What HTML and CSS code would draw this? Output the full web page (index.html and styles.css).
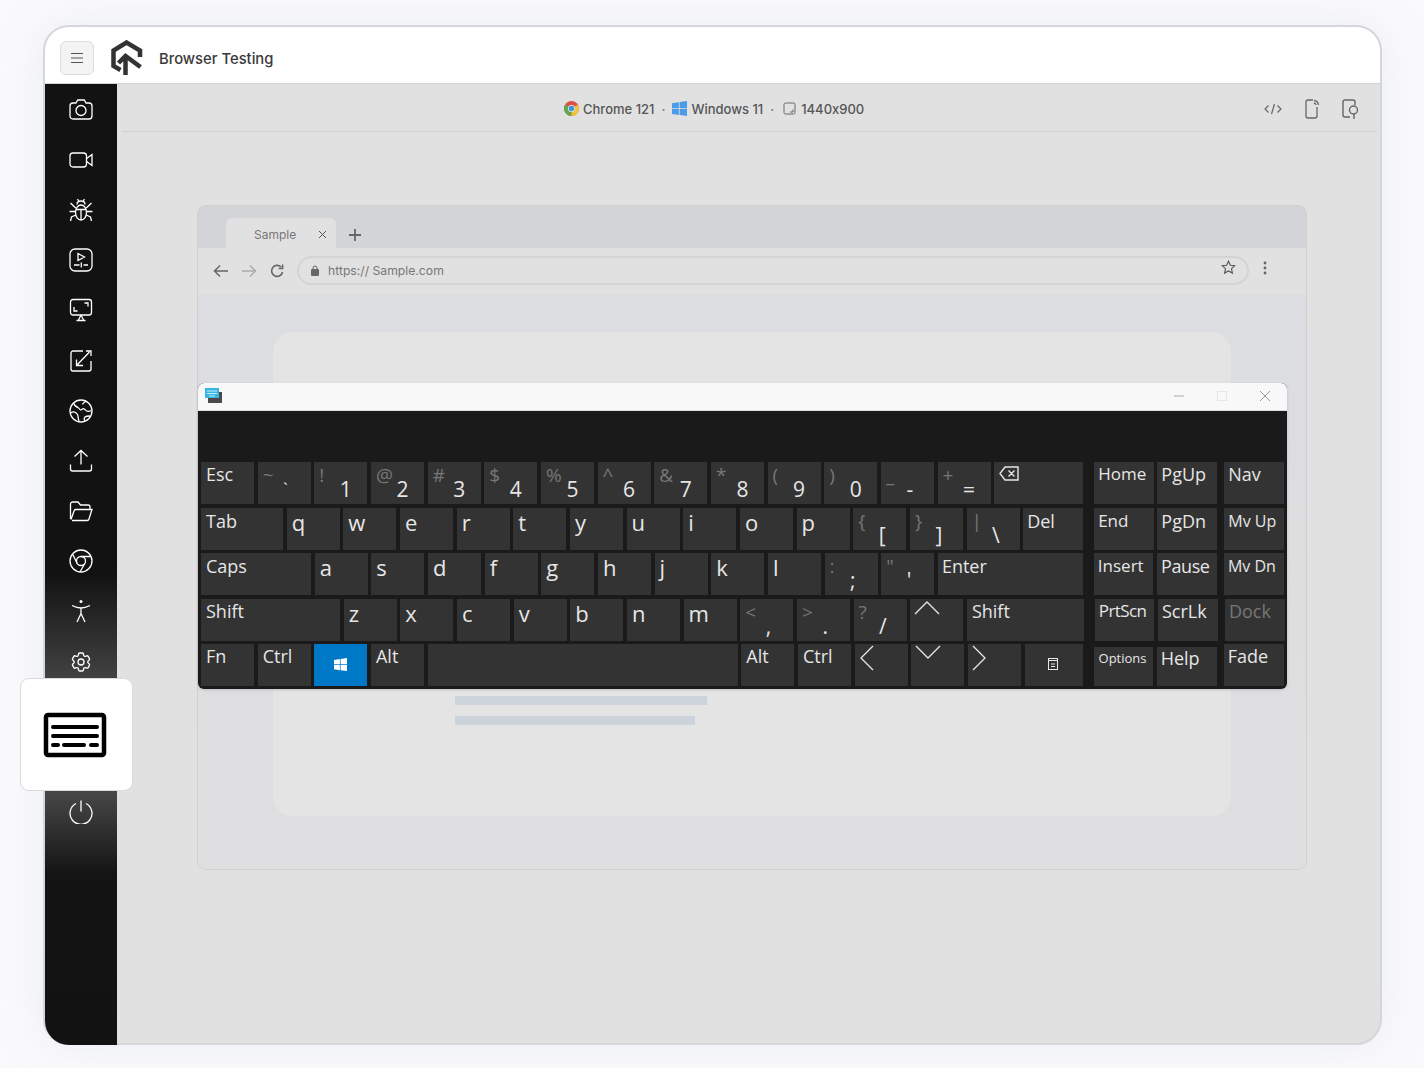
FILE: index.html
```html
<!DOCTYPE html>
<html lang="en">
<head>
    <meta charset="UTF-8">
    <meta name="viewport" content="width=device-width, initial-scale=1.0">
    <title>Browser Testing</title>
    <link rel="stylesheet" href="styles.css">
</head>
<body>
<div class="frame">
    <header class="topbar">
        <button class="menu-btn">
            <svg width="14" height="12" viewBox="0 0 14 12"><path d="M1 1.5h12M1 6h12M1 10.5h12" stroke="#555" stroke-width="1.2" fill="none"/></svg>
        </button>
        <svg class="logo" width="33" height="35" viewBox="0 0 32 35" fill="none" stroke="#333" stroke-width="4.5">
            <path d="M29.5 17V10.500L16 2.500 3 10.500V26l7 4"/>
            <path d="M15 35V16M8 23l7-7 15 11"/>
        </svg>
        <span class="app-title">Browser Testing</span>
    </header>

    <div class="body-row">
        <nav class="sidebar">
            <div class="side-item"><svg class="ico" viewBox="0 0 24 24"><path d="M7 5l1.700-3h6.600L17 5h3a3 3 0 0 1 3 3v10a3 3 0 0 1-3 3H4a3 3 0 0 1-3-3V8a3 3 0 0 1 3-3z"/><circle cx="12" cy="12.500" r="5"/><path d="M19.500 8.500h.1"/></svg></div>
            <div class="side-item"><svg class="ico" viewBox="0 0 24 24"><rect x="1" y="5" width="16.500" height="14" rx="3"/><path d="M17.500 10.500L23 6.500v11l-5.500-4"/></svg></div>
            <div class="side-item"><svg class="ico" viewBox="0 0 24 24"><ellipse cx="12" cy="14.500" rx="5.500" ry="7.500"/><path d="M6.800 11.500h10.400M12 11.500V22M8 6.500C8 4 9.500 3 12 3s4 1 4 3.500M8.500 1l1.500 2.500M15.500 1L14 3.500M1.500 5l5.200 5M22.500 5l-5.200 5M0.500 13.500h6M23.500 13.500h-6M6.800 17L2.500 19l-1 4M17.200 17l4.300 2 1 4"/></svg></div>
            <div class="side-item"><svg class="ico" viewBox="0 0 24 24"><rect x="1" y="1" width="22" height="22" rx="5"/><path d="M9 5.500l6.500 3.500L9 12.500zM5 17h5.500M14.500 17H19M12.300 14.500v5"/></svg></div>
            <div class="side-item"><svg class="ico" viewBox="0 0 24 24"><rect x="1.500" y="1.500" width="21" height="15.500" rx="2.500"/><path d="M5 9v4h3.500M15.500 5H19v3.500M12 17l-2.500 5M12 17l2.500 5M7.500 22.500h9"/></svg></div>
            <div class="side-item"><svg class="ico" viewBox="0 0 24 24"><path d="M14 2H4a2 2 0 0 0-2 2v16a2 2 0 0 0 2 2h16a2 2 0 0 0 2-2V12M7.500 16.500l13-13.500M7.500 10.500v6h6.500M17 2h5v5"/></svg></div>
            <div class="side-item"><svg class="ico" viewBox="0 0 24 24"><circle cx="12" cy="12" r="11"/><path d="M4.500 4c1 2.500 2.500 4 4.500 4.500 1 .3 1 2 2.500 2.300 1.500.2 2.500-1.800 3.500-1 1.500 1 2 2.500 4 2.500 1 0 2-.5 3-.5M17 2c-1 1.500-3.500 2-3.500 3.500M1.500 14c1.500-1 3.500-1.500 5-.5 1.500 1 2.500 2 2.500 3.500s.5 3 1 6M15.500 22c-.5-1.500-.5-3 .5-4 1-1 3-1 5-1"/></svg></div>
            <div class="side-item"><svg class="ico" viewBox="0 0 24 24"><path d="M12 15.500V1.500M5.500 7.500L12 1.500l6.500 6M1.500 15.500V20a2 2 0 0 0 2 2h17a2 2 0 0 0 2-2v-4.500"/></svg></div>
            <div class="side-item"><svg class="ico" viewBox="0 0 24 24"><path d="M1.500 20V5a2 2 0 0 1 2-2h5.500l2.500 3H19a2 2 0 0 1 2 2v2.500M3 21.500h15a2 2 0 0 0 2-1.500l3-9.500H7a2 2 0 0 0-2 1.500l-3 8.500"/></svg></div>
            <div class="side-item"><svg class="ico" viewBox="0 0 24 24"><circle cx="12" cy="12" r="11"/><circle cx="12" cy="12" r="4.500"/><path d="M12 7.500h10M8.200 14.500L3.500 5M15.800 14.500L11 23"/></svg></div>
            <div class="side-item"><svg class="ico" viewBox="0 0 24 24"><circle cx="12" cy="2.500" r="1.500" fill="#fff" stroke="none"/><path d="M3 6.500c3 1.500 6 2.500 9 2.500s6-1 9-2.500M12 9v6M12 14.500L8 23M12 14.500L16 23"/></svg></div>
            <div class="side-item"><svg class="ico" viewBox="0 0 24 24"><path d="M9.594 3.940c.09-.542.56-.94 1.110-.94h2.593c.55 0 1.020.398 1.110.94l.213 1.281c.063.374.313.686.645.87.074.04.147.083.22.127.325.196.72.257 1.075.124l1.217-.456a1.125 1.125 0 0 1 1.370.49l1.296 2.247a1.125 1.125 0 0 1-.26 1.431l-1.003.827c-.293.241-.438.613-.43.992a7.723 7.723 0 0 1 0 .255c-.008.378.137.75.43.991l1.004.827c.424.35.534.955.26 1.430l-1.298 2.247a1.125 1.125 0 0 1-1.369.491l-1.217-.456c-.355-.133-.75-.072-1.076.124a6.470 6.470 0 0 1-.22.128c-.331.183-.581.495-.644.869l-.213 1.281c-.09.543-.56.94-1.110.94h-2.594c-.55 0-1.019-.398-1.110-.94l-.213-1.281c-.062-.374-.312-.686-.644-.87a6.520 6.520 0 0 1-.22-.127c-.325-.196-.72-.257-1.076-.124l-1.217.456a1.125 1.125 0 0 1-1.369-.49l-1.297-2.247a1.125 1.125 0 0 1 .26-1.431l1.004-.827c.292-.24.437-.613.43-.991a6.932 6.932 0 0 1 0-.255c.007-.38-.138-.751-.43-.992l-1.004-.827a1.125 1.125 0 0 1-.26-1.430l1.297-2.247a1.125 1.125 0 0 1 1.370-.491l1.216.456c.356.133.751.072 1.076-.124.072-.044.146-.086.22-.128.332-.183.582-.495.644-.869l.214-1.280Z"/><circle cx="12" cy="12" r="3"/></svg></div>
            <div class="side-gap"></div>
            <div class="side-item"><svg class="ico" viewBox="0 0 24 24"><path d="M12 0.500V11.500M7 3.500a11 11 0 1 0 10 0"/></svg></div>
        </nav>

        <main class="content">
            <div class="toolbar">
                <div class="env">
                    <svg width="15" height="15" viewBox="0 0 16 16"><circle cx="8" cy="8" r="8" fill="#dd5044"/><path d="M8 8L1.100 4A8 8 0 0 0 8 16z" fill="#5fa84f"/><path d="M8 8l6.900-4A8 8 0 0 1 8 16z" fill="#f0c53c"/><circle cx="8" cy="8" r="3.800" fill="#e6e6e6"/><circle cx="8" cy="8" r="2.900" fill="#3b95d8"/></svg>
                    <span>Chrome 121</span>
                    <span class="dot">·</span>
                    <svg width="15" height="15" viewBox="0 0 15 15" fill="#4a9ce8"><path d="M0 2.200l6.800-1v6H0zM7.600 1.100L15 0v7.200H7.600zM0 8h6.800v6L0 13zM7.600 8H15v7l-7.400-1z"/></svg>
                    <span>Windows 11</span>
                    <span class="dot">·</span>
                    <svg class="res-ico" width="13" height="13" viewBox="0 0 13 13" fill="none" stroke="#666"><rect x="1" y="1" width="11" height="11" rx="1.500"/><path d="M10 7.500V10H7"/></svg>
                    <span>1440x900</span>
                </div>
                <div class="tools">
                    <svg width="20" height="20" viewBox="0 0 20 20" fill="none" stroke="#666" stroke-width="1.200"><path d="M5.500 6.500L2 10l3.500 3.500M14.500 6.500L18 10l-3.500 3.500M11.500 5l-3 10"/></svg>
                    <svg width="20" height="20" viewBox="0 0 20 20" fill="none" stroke="#666" stroke-width="1.300"><path d="M11 1H6a2 2 0 0 0-2 2v14a2 2 0 0 0 2 2h7a2 2 0 0 0 2-2V8M9.500 16h.1M12 1.500a5 5 0 0 1 4.500 4.500M12 4a2.500 2.500 0 0 1 2 2"/></svg>
                    <svg width="20" height="20" viewBox="0 0 20 20" fill="none" stroke="#666" stroke-width="1.400"><path d="M9 18H4a2 2 0 0 1-2-2V3a2 2 0 0 1 2-2h8a2 2 0 0 1 2 2v3"/><circle cx="12.500" cy="11" r="4"/><path d="M13 15v5"/></svg>
                </div>
            </div>

            <div class="stage">
                <div class="browser">
                    <div class="tabstrip">
                        <div class="tab">
                            <span>Sample</span>
                            <svg width="9" height="9" viewBox="0 0 9 9" stroke="#555" fill="none"><path d="M1 1l7 7M8 1L1 8"/></svg>
                        </div>
                        <svg class="tab-plus" width="14" height="14" viewBox="0 0 14 14" stroke="#666" stroke-width="1.800" fill="none"><path d="M7 1v12M1 7h12"/></svg>
                    </div>
                    <div class="addrbar">
                        <svg width="16" height="14" viewBox="0 0 16 14" stroke="#666" stroke-width="1.500" fill="none"><path d="M15 7H2M7 1.500L1.500 7 7 12.500"/></svg>
                        <svg width="16" height="14" viewBox="0 0 16 14" stroke="#aaa" stroke-width="1.500" fill="none"><path d="M1 7h13M9 1.500L14.500 7 9 12.500"/></svg>
                        <svg class="reload" width="14" height="14" viewBox="0 0 14 14" stroke="#666" stroke-width="1.600" fill="none"><path d="M12.500 8a5.500 5.500 0 1 1-1.500-5M12.600 0.500v4h-4"/></svg>
                        <div class="url">
                            <svg width="8" height="11" viewBox="0 0 8 11"><rect y="4" width="8" height="7" rx="1" fill="#666"/><path d="M2 4.500V3a2 2 0 0 1 4 0v1.500" fill="none" stroke="#666"/></svg>
                            <span class="url-text">https:// Sample.com</span>
                            <svg class="star" width="15" height="15" viewBox="0 0 15 15" fill="none" stroke="#555" stroke-width="1.100"><path d="M7.500 1.200l1.900 4 4.400.5-3.300 3 .9 4.400-3.900-2.200-3.900 2.200.9-4.400-3.300-3 4.400-.5z"/></svg>
                        </div>
                        <svg class="kebab" width="4" height="14" viewBox="0 0 4 14" fill="#666"><circle cx="2" cy="2" r="1.400"/><circle cx="2" cy="7" r="1.400"/><circle cx="2" cy="12" r="1.400"/></svg>
                    </div>
                    <div class="page">
                        <div class="page-card">
                            <div class="bar bar-a"></div>
                            <div class="bar bar-b"></div>
                        </div>
                    </div>

                    <div class="osk">
                        <div class="osk-title">
                            <svg width="17" height="15" viewBox="0 0 17 15"><rect x="3" y="4" width="14" height="11" fill="#4a4a4a"/><rect width="14" height="10" fill="#35b6e0"/><path d="M2 3h10M2 5.500h10M4 8h6" stroke="#cdeefa"/></svg>
                            <div class="win-btns">
                                <svg width="10" height="10" viewBox="0 0 10 10" stroke="#aaa" fill="none"><path d="M0 5h10"/></svg>
                                <svg width="10" height="10" viewBox="0 0 10 10" stroke="#e6e6e6" fill="none"><rect x=".5" y=".5" width="9" height="9"/></svg>
                                <svg width="10" height="10" viewBox="0 0 10 10" stroke="#999" fill="none"><path d="M0 0l10 10M10 0L0 10"/></svg>
                            </div>
                        </div>
                        <div class="keys">
                            <div class="kb-row">
                                <div class="key">Esc</div>
                                <div class="key two"><span class="sec">~</span><span class="pri hi">`</span></div>
                                <div class="key two"><span class="sec">!</span><span class="pri">1</span></div>
                                <div class="key two"><span class="sec">@</span><span class="pri">2</span></div>
                                <div class="key two"><span class="sec">#</span><span class="pri">3</span></div>
                                <div class="key two"><span class="sec">$</span><span class="pri">4</span></div>
                                <div class="key two"><span class="sec">%</span><span class="pri">5</span></div>
                                <div class="key two"><span class="sec">^</span><span class="pri">6</span></div>
                                <div class="key two"><span class="sec">&amp;</span><span class="pri">7</span></div>
                                <div class="key two"><span class="sec">*</span><span class="pri">8</span></div>
                                <div class="key two"><span class="sec">(</span><span class="pri">9</span></div>
                                <div class="key two"><span class="sec">)</span><span class="pri">0</span></div>
                                <div class="key two"><span class="sec">_</span><span class="pri">-</span></div>
                                <div class="key two"><span class="sec">+</span><span class="pri">=</span></div>
                                <div class="key w89"><svg class="bksp" width="20" height="15" viewBox="0 0 20 15" fill="none" stroke="#e8e8e8" stroke-width="1.400"><path d="M6 1h13v13H6L1 7.500zM9.500 4.500l6 6M15.500 4.500l-6 6"/></svg></div>
                                <div class="key nav w59 first-nav">Home</div>
                                <div class="key nav w60">PgUp</div>
                                <div class="key nav w60 last-nav">Nav</div>
                            </div>
                            <div class="kb-row">
                                <div class="key w82">Tab</div>
                                <div class="key ltr">q</div>
                                <div class="key ltr">w</div>
                                <div class="key ltr">e</div>
                                <div class="key ltr">r</div>
                                <div class="key ltr">t</div>
                                <div class="key ltr">y</div>
                                <div class="key ltr">u</div>
                                <div class="key ltr">i</div>
                                <div class="key ltr">o</div>
                                <div class="key ltr">p</div>
                                <div class="key two"><span class="sec">{</span><span class="pri">[</span></div>
                                <div class="key two"><span class="sec">}</span><span class="pri">]</span></div>
                                <div class="key two"><span class="sec">|</span><span class="pri">\</span></div>
                                <div class="key w60 del">Del</div>
                                <div class="key nav w59 first-nav">End</div>
                                <div class="key nav w60">PgDn</div>
                                <div class="key nav w60 last-nav small">Mv Up</div>
                            </div>
                            <div class="kb-row">
                                <div class="key w110">Caps</div>
                                <div class="key ltr">a</div>
                                <div class="key ltr">s</div>
                                <div class="key ltr">d</div>
                                <div class="key ltr">f</div>
                                <div class="key ltr">g</div>
                                <div class="key ltr">h</div>
                                <div class="key ltr">j</div>
                                <div class="key ltr">k</div>
                                <div class="key ltr">l</div>
                                <div class="key two"><span class="sec">:</span><span class="pri">;</span></div>
                                <div class="key two"><span class="sec">"</span><span class="pri">'</span></div>
                                <div class="key w145 enter">Enter</div>
                                <div class="key nav w59 first-nav">Insert</div>
                                <div class="key nav w60 pause">Pause</div>
                                <div class="key nav w60 last-nav small">Mv Dn</div>
                            </div>
                            <div class="kb-row">
                                <div class="key w139">Shift</div>
                                <div class="key ltr">z</div>
                                <div class="key ltr">x</div>
                                <div class="key ltr">c</div>
                                <div class="key ltr">v</div>
                                <div class="key ltr">b</div>
                                <div class="key ltr">n</div>
                                <div class="key ltr">m</div>
                                <div class="key two"><span class="sec">&lt;</span><span class="pri">,</span></div>
                                <div class="key two"><span class="sec">&gt;</span><span class="pri">.</span></div>
                                <div class="key two"><span class="sec">?</span><span class="pri">/</span></div>
                                <div class="key"><svg class="chev" width="26" height="15" viewBox="0 0 26 15" fill="none" stroke="#e8e8e8" stroke-width="1.300"><path d="M1 14L13 2l12 12"/></svg></div>
                                <div class="key w117">Shift</div>
                                <div class="key nav w59 first-nav prtscn">PrtScn</div>
                                <div class="key nav w60">ScrLk</div>
                                <div class="key nav w60 last-nav off">Dock</div>
                            </div>
                            <div class="kb-row">
                                <div class="key">Fn</div>
                                <div class="key">Ctrl</div>
                                <div class="key win"><svg width="13" height="13" viewBox="0 0 15 15" fill="#fff"><path d="M0 2.200l6.800-1v6H0zM7.600 1.100L15 0v7.200H7.600zM0 8h6.800v6L0 13zM7.600 8H15v7l-7.400-1z"/></svg></div>
                                <div class="key">Alt</div>
                                <div class="key w310"></div>
                                <div class="key">Alt</div>
                                <div class="key">Ctrl</div>
                                <div class="key"><svg class="chev" width="15" height="26" viewBox="0 0 15 26" fill="none" stroke="#e8e8e8" stroke-width="1.300"><path d="M14 1L2 13l12 12"/></svg></div>
                                <div class="key"><svg class="chev" width="26" height="15" viewBox="0 0 26 15" fill="none" stroke="#e8e8e8" stroke-width="1.300"><path d="M1 1l12 12L25 1"/></svg></div>
                                <div class="key"><svg class="chev" width="15" height="26" viewBox="0 0 15 26" fill="none" stroke="#e8e8e8" stroke-width="1.300"><path d="M1 1l12 12L1 25"/></svg></div>
                                <div class="key w58 menu-key"><svg width="10" height="12" viewBox="0 0 10 12" fill="none" stroke="#e8e8e8"><rect x=".5" y=".5" width="9" height="11"/><path d="M0 2.500h10M3 6h4M3 8.500h4"/></svg></div>
                                <div class="key nav w59 first-nav low tiny">Options</div>
                                <div class="key nav w60 low">Help</div>
                                <div class="key nav w60 last-nav">Fade</div>
                            </div>
                        </div>
                    </div>
                </div>
            </div>
        </main>
    </div>

    <div class="float-card">
        <svg width="64" height="46" viewBox="0 0 64 46" fill="none"><rect x="3" y="3" width="58" height="40" rx="2" stroke="#000" stroke-width="4.500"/><path d="M10 15h44M10 24h44M10 33h5M21 33h20M48 33h6" stroke="#000" stroke-width="4" stroke-linecap="round"/></svg>
    </div>
</div>
</body>
</html>
```

FILE: styles.css
```css
* {
    box-sizing: border-box;
}
body {
    margin: 0;
    height: 1068px;
    overflow: hidden;
    background: #fafafc;
    font-family: Inter, "Liberation Sans", sans-serif;
    font-feature-settings: "calt" 0;
}
.frame {
    position: relative;
    width: 1339px;
    height: 1020px;
    margin: 25px 0 0 43px;
    border: 2px solid #d5d6dc;
    border-radius: 26px;
    background: #e1e1e1;
    box-shadow: 0 0 40px rgba(210, 214, 228, 0.35);
}
.topbar {
    display: flex;
    align-items: center;
    height: 57px;
    padding: 5px 0 0 15px;
    background: #fff;
    border-bottom: 1px solid #d4d4d4;
    border-radius: 24px 24px 0 0;
}
.menu-btn {
    display: flex;
    align-items: center;
    justify-content: center;
    width: 34px;
    height: 34px;
    padding: 0;
    background: #f3f3f3;
    border: 1px solid #dcdcdc;
    border-radius: 6px;
}
.logo {
    margin: -1px 0 0 16px;
}
.app-title {
    margin: 2px 0 0 16px;
    font-size: 14.8px;
    font-weight: 500;
    color: #3a3a3a;
}
.body-row {
    display: flex;
    height: 961px;
}

/* sidebar */
.sidebar {
    width: 72px;
    flex: none;
    padding-top: 0.5px;
    background: linear-gradient(#121212 0, #121212 490px, #404040 590px, #464646 710px, #141414 790px, #121212 100%);
    border-radius: 0 0 0 24px;
}
.side-item {
    display: flex;
    align-items: center;
    justify-content: center;
    height: 50.2px;
}
.side-gap {
    height: 100.4px;
}
.ico {
    width: 24px;
    height: 24px;
    fill: none;
    stroke: #fff;
    stroke-width: 1.3;
}
.float-card {
    position: absolute;
    left: -25px;
    top: 651px;
    display: flex;
    align-items: center;
    justify-content: center;
    width: 113px;
    height: 113px;
    padding-right: 3px;
    background: #fff;
    border: 1px solid #d9dade;
    border-radius: 9px;
}

/* main */
.content {
    flex: 1;
    min-width: 0;
}
.toolbar {
    position: relative;
    display: flex;
    align-items: center;
    justify-content: flex-end;
    height: 48px;
    margin: 0 3px 0 5px;
    padding-top: 2px;
    border-bottom: 1px solid #d0d0d0;
}
.env {
    position: absolute;
    left: 442px;
    display: flex;
    align-items: center;
    gap: 4px;
    font-size: 13px;
    font-weight: 500;
    color: #555;
    white-space: nowrap;
}
.dot {
    margin: 0 3px;
    color: #777;
}
.res-ico {
    margin: 0 1px 0 2px;
}
.tools {
    display: flex;
    gap: 19px;
    margin-right: 16px;
}
.stage {
    padding: 73px 0 0 80px;
}

/* fake browser */
.browser {
    position: relative;
    width: 1110px;
    height: 665px;
    background: #e1e1e1;
    border: 1px solid #d0d0d0;
    border-radius: 9px;
}
.tabstrip {
    display: flex;
    align-items: flex-end;
    height: 42px;
    padding-left: 28px;
    background: #d3d4d8;
    border-radius: 8px 8px 0 0;
}
.tab {
    display: flex;
    align-items: center;
    justify-content: space-between;
    width: 110px;
    height: 30px;
    padding: 2px 9px 0 28px;
    background: #e1e1e1;
    border-radius: 6px 6px 0 0;
    font-size: 12px;
    color: #777;
}
.tab-plus {
    margin: 0 0 6px 12px;
}
.addrbar {
    display: flex;
    align-items: center;
    gap: 12px;
    height: 47px;
    padding: 0 0 2px 15px;
    background: #e1e1e1;
}
.reload {
    margin-left: 1px;
}
.url {
    display: flex;
    align-items: center;
    width: 952px;
    height: 29px;
    margin-left: 1px;
    padding: 0 11px 0 12px;
    border: 2px solid #d3d4d8;
    border-radius: 15px;
}
.url-text {
    margin-left: 9px;
    font-size: 12.2px;
    color: #777;
}
.star {
    margin: -6px 0 0 auto;
}
.kebab {
    margin: -6px 0 0 2px;
}
.page {
    height: 574px;
    padding: 37px 0 0 75px;
    background: linear-gradient(#dcdde0, #dfdfe1);
    border-radius: 0 0 8px 8px;
}
.page-card {
    position: relative;
    width: 958px;
    height: 484px;
    padding: 364px 0 0 182px;
    background: #e4e4e4;
    border-radius: 20px;
}
.bar {
    height: 9px;
    margin-bottom: 11px;
    background: #cdd3da;
}
.bar-a {
    width: 252px;
}
.bar-b {
    width: 240px;
}

/* on screen keyboard */
.osk {
    position: absolute;
    left: 0;
    top: 177px;
    width: 1089px;
    height: 306px;
    background: #1a1a1a;
    border-radius: 6px;
    box-shadow: 0 1px 3px rgba(0, 0, 0, 0.15);
}
.osk-title {
    display: flex;
    align-items: center;
    justify-content: space-between;
    height: 28px;
    padding: 0 17px 2px 7px;
    background: #f8f8f8;
    border-bottom: 1px solid #e0e0e0;
    border-radius: 6px 6px 0 0;
}
.win-btns {
    display: flex;
    gap: 33px;
}
.keys {
    padding: 51px 0 0 3px;
}
.kb-row {
    display: flex;
    gap: 3.67px;
    height: 42px;
    margin-bottom: 3.5px;
}
.key {
    width: 53px;
    height: 42px;
    flex: none;
    padding: 0 5px;
    background: #333;
    font-family: "Open Sans", "Noto Sans", sans-serif;
    font-size: 18px;
    line-height: 24px;
    color: #e6e6e6;
}
.kb-row:nth-child(2) .key,
.kb-row:nth-child(3) .key {
    padding-top: 1px;
}
.ltr,
.kb-row .ltr {
    padding-top: 1px;
    font-size: 22px;
    line-height: 27px;
}
.two {
    display: grid;
    grid-template-columns: 20.5px 1fr;
    padding: 1px 0 0 5px;
}
.sec {
    font-size: 19px;
    color: #777;
    white-space: nowrap;
}
.pri {
    align-self: end;
    font-size: 21px;
    line-height: 30px;
    white-space: nowrap;
}
.hi {
    font-size: 16px;
}
.w58 { width: 58px; }
.w59 { width: 59.5px; }
.w60 { width: 60px; }
.w82 { width: 82px; }
.w89 { width: 89px; }
.w110 { width: 110px; }
.w117 { width: 117px; }
.w139 { width: 139px; }
.w145 { width: 145px; }
.w310 { width: 310px; }
.enter,
.del {
    padding-left: 4px;
}
.nav {
    padding-left: 4px;
}
.first-nav {
    margin-left: 7.3px;
    font-size: 17px;
}
.last-nav {
    margin-left: 3.3px;
}
.pause {
    letter-spacing: -0.4px;
}
.prtscn {
    letter-spacing: -0.6px;
}
.small {
    font-size: 16px;
}
.tiny {
    padding-left: 5px;
    font-size: 13px;
}
.off {
    color: #777;
}
.low {
    height: 39px;
    margin-top: 3px;
    line-height: 22px;
}
.bksp {
    margin-top: -2px;
}
.chev {
    display: block;
    margin-top: 1px;
    margin-left: -1px;
}
.win {
    display: flex;
    align-items: center;
    justify-content: center;
    padding-bottom: 2px;
    background: #0078c8;
}
.menu-key {
    display: flex;
    align-items: center;
    justify-content: center;
    padding: 0 7px 2px 5px;
}
```
